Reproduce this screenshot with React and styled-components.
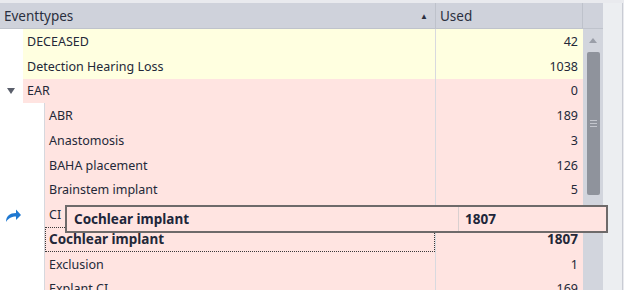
import React from "react";
import styled, { createGlobalStyle } from "styled-components";

const Global = createGlobalStyle`
  html, body { margin: 0; padding: 0; background: #fff; }
  body { font-family: "Noto Sans", "Open Sans", sans-serif; font-size: 12.5px; color: #232838; }
`;

const ROW_H = 24.75;

const Frame = styled.div`
  width: 624px;
  height: 290px;
  overflow: hidden;
  position: relative;
  background: #e9eaee;
  padding-top: 3px;
  box-sizing: border-box;
  display: grid;
  grid-template-columns: 603px 21px;
`;

const Grid = styled.div`
  display: flex;
  flex-direction: column;
  background: #fff;
  border-right: 3px solid #d9dbe1;
  width: 606px;
  box-sizing: border-box;
`;

const SideStrip = styled.div`
  background: #eceef1;
  border-right: 1px solid #c9ccd4;
  margin-right: 1px;
`;

const Header = styled.div`
  display: grid;
  grid-template-columns: 436px 147px 20px;
  height: 26px;
  background: #cfd2db;
  border-bottom: 1px solid #bfc3cc;
  box-sizing: border-box;
`;

const HeadCell = styled.div`
  display: flex;
  align-items: center;
  padding: 0 5px 0 4px;
  border-right: ${p => (p.$last ? "none" : "1px solid #bec2cb")};
  font-size: 13.5px;
  color: #2a2f3e;
  justify-content: space-between;
`;

const SortArrow = styled.span`
  font-size: 8px;
  color: #2a2f3e;
  margin-right: 2px;
`;

const Body = styled.div`
  display: grid;
  grid-template-columns: 583px 20px;
  flex: 1;
  min-height: 0;
`;

const Rows = styled.div`
  display: flex;
  flex-direction: column;
`;

const Row = styled.div`
  display: grid;
  grid-template-columns: ${p => (p.$level ? "45px" : "23px")} 1fr 147px;
  height: ${ROW_H}px;
  flex-shrink: 0;
`;

const Indent = styled.div`
  background: #fff;
  display: flex;
  align-items: center;
  justify-content: center;
  border-right: ${p => (p.$line ? "1px solid #d6d8de" : "none")};
  box-sizing: border-box;
`;

const NameCell = styled.div`
  background: ${p => p.$bg};
  display: flex;
  align-items: center;
  padding-left: 4px;
  border-right: 1px solid #d8d9df;
  font-weight: ${p => (p.$bold ? 700 : 400)};
  font-size: ${p => (p.$bold ? "13.5px" : "12.5px")};
  position: relative;
`;

const Focus = styled.div`
  position: absolute;
  inset: 0 0 0 0;
  border: 1px dotted #3a3a3a;
  pointer-events: none;
`;

const NumCell = styled.div`
  background: ${p => p.$bg};
  display: flex;
  align-items: center;
  justify-content: flex-end;
  padding-right: 5px;
  font-weight: ${p => (p.$bold ? 700 : 400)};
  font-size: ${p => (p.$bold ? "13.5px" : "12.5px")};
`;

const Scrollbar = styled.div`
  background: #d2d5dd;
  display: flex;
  flex-direction: column;
  align-items: center;
  padding-top: 9px;
`;

const ScrollUp = styled.div`
  width: 0;
  height: 0;
  border-left: 4px solid transparent;
  border-right: 4px solid transparent;
  border-bottom: 5px solid #9a9ea8;
  margin-bottom: 9px;
`;

const Thumb = styled.div`
  width: 13px;
  height: 143px;
  background: #8f939c;
  border-radius: 2px;
  display: flex;
  flex-direction: column;
  align-items: center;
  justify-content: center;
  gap: 2px;
`;

const Grip = styled.div`
  width: 7px;
  height: 1px;
  background: #c3c6cd;
`;

const DragBox = styled.div`
  position: absolute;
  left: 65px;
  top: 205px;
  width: 543px;
  height: 28px;
  box-sizing: border-box;
  border: 2px solid #6e6a6a;
  background: #ffe4e1;
  display: grid;
  grid-template-columns: 392px 1fr;
  font-weight: 700;
  font-size: 13.5px;
  color: #20263a;
`;

const DragCell = styled.div`
  display: flex;
  align-items: center;
  padding-left: ${p => (p.$num ? "6px" : "7px")};
  border-right: ${p => (p.$num ? "none" : "1px solid #d9d0d0")};
`;

const ArrowIcon = styled.svg`
  position: absolute;
  left: 4px;
  top: 208px;
`;

const YELLOW = "#ffffe0";
const PINK = "#ffe4e1";

const data = [
  { name: "DECEASED", used: 42, bg: YELLOW, level: 0 },
  { name: "Detection Hearing Loss", used: 1038, bg: YELLOW, level: 0 },
  { name: "EAR", used: 0, bg: PINK, level: 0, expand: true },
  { name: "ABR", used: 189, bg: PINK, level: 1 },
  { name: "Anastomosis", used: 3, bg: PINK, level: 1 },
  { name: "BAHA placement", used: 126, bg: PINK, level: 1 },
  { name: "Brainstem implant", used: 5, bg: PINK, level: 1 },
  { name: "CI", used: "", bg: PINK, level: 1 },
  { name: "Cochlear implant", used: 1807, bg: PINK, level: 1, bold: true, focus: true },
  { name: "Exclusion", used: 1, bg: PINK, level: 1 },
  { name: "Explant CI", used: 169, bg: PINK, level: 1 },
];

const Expander = styled.span`
  width: 0;
  height: 0;
  border-left: 4px solid transparent;
  border-right: 4px solid transparent;
  border-top: 6px solid #5a5f6b;
  margin-left: -2px;
`;

export default function App() {
  return (
    <>
      <Global />
      <Frame>
        <Grid>
          <Header>
            <HeadCell>
              <span>Eventtypes</span>
              <SortArrow>▲</SortArrow>
            </HeadCell>
            <HeadCell>Used</HeadCell>
            <HeadCell $last />
          </Header>
          <Body>
            <Rows>
              {data.map((r, i) => (
                <Row key={i} $level={r.level}>
                  <Indent $line={r.level > 0}>{r.expand && <Expander />}</Indent>
                  <NameCell $bg={r.bg} $bold={r.bold} $level={r.level}>
                    {r.name}
                    {r.focus && <Focus />}
                  </NameCell>
                  <NumCell $bg={r.bg} $bold={r.bold}>{r.used}</NumCell>
                </Row>
              ))}
            </Rows>
            <Scrollbar>
              <ScrollUp />
              <Thumb>
                <Grip />
                <Grip />
                <Grip />
              </Thumb>
            </Scrollbar>
          </Body>
        </Grid>
        <SideStrip />
        <ArrowIcon width="18" height="16" viewBox="0 0 18 16">
          <path d="M2 14 C2 8 6 5 12 5 L12 1.5 L17 7 L12 12 L12 8.5 C8 8.5 4.5 10 2 14 Z" fill="#1f78d1" />
        </ArrowIcon>
        <DragBox>
          <DragCell>Cochlear implant</DragCell>
          <DragCell $num>1807</DragCell>
        </DragBox>
      </Frame>
    </>
  );
}
